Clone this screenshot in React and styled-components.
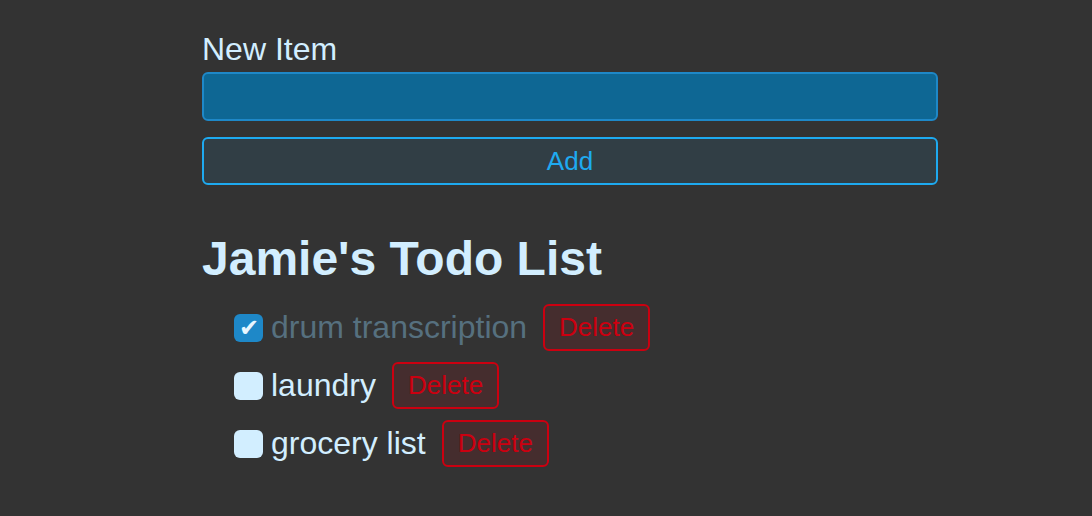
import React, { useState } from 'react';
import styled, { createGlobalStyle } from 'styled-components';

const GlobalStyle = createGlobalStyle`
  body {
    margin: 0;
    background: #333333;
    font-family: "Liberation Sans", Arial, sans-serif;
  }
`

const Page = styled.div`
  padding: 31px 0 0 202px;
  width: 736px;
`

const Label = styled.label`
  display: block;
  font-size: 32px;
  color: #d2eeff;
  margin-bottom: 4px;
`

const TextInput = styled.input`
  display: block;
  box-sizing: border-box;
  width: 100%;
  height: 49px;
  background: #0e6794;
  border: 2px solid #1e88c8;
  border-radius: 6px;
  outline: none;
  color: #d2eeff;
  font-size: 26px;
  font-family: inherit;
`

const AddButton = styled.button`
  display: block;
  box-sizing: border-box;
  width: 100%;
  height: 48px;
  margin-top: 16px;
  background: #313e45;
  border: 2px solid #1eaaf0;
  border-radius: 6px;
  color: #1eaaf0;
  font-size: 26px;
  font-family: inherit;
`

const Title = styled.h1`
  margin: 46px 0 18px;
  font-size: 48px;
  font-weight: bold;
  color: #d2eeff;
`

const List = styled.ul`
  list-style: none;
  margin: 0;
  padding: 0 0 0 32px;
  display: flex;
  flex-direction: column;
  gap: 11px;
`

const Row = styled.li`
  display: flex;
  align-items: center;
  height: 47px;
`

const Check = styled.span`
  width: 29px;
  height: 28px;
  border-radius: 6px;
  background: ${p => (p.checked ? '#1e88c8' : '#d2eeff')};
  color: #e8f6ff;
  font-size: 24px;
  line-height: 28px;
  text-align: center;
  margin-right: 8px;
  cursor: pointer;
`

const ItemText = styled.span`
  font-size: 32px;
  color: ${p => (p.done ? '#56707f' : '#d2eeff')};
  margin-right: 16px;
`

const DeleteButton = styled.button`
  box-sizing: border-box;
  height: 47px;
  padding: 0 14px;
  background: #452d2e;
  border: 2px solid #cc0010;
  border-radius: 6px;
  color: #cc0010;
  font-size: 26px;
  font-family: inherit;
`

export default function App() {
  const [items, setItems] = useState([
    { id: 1, text: 'drum transcription', done: true },
    { id: 2, text: 'laundry', done: false },
    { id: 3, text: 'grocery list', done: false },
  ])

  const toggle = id =>
    setItems(items.map(i => (i.id === id ? { ...i, done: !i.done } : i)))

  return (
    <Page>
      <GlobalStyle />
      <Label htmlFor="new-item">New Item</Label>
      <TextInput id="new-item" />
      <AddButton>Add</AddButton>
      <Title>Jamie's Todo List</Title>
      <List>
        {items.map(item => (
          <Row key={item.id}>
            <Check checked={item.done} onClick={() => toggle(item.id)}>
              {item.done ? '✔' : ''}
            </Check>
            <ItemText done={item.done}>{item.text}</ItemText>
            <DeleteButton onClick={() => setItems(items.filter(i => i.id !== item.id))}>
              Delete
            </DeleteButton>
          </Row>
        ))}
      </List>
    </Page>
  )
}
